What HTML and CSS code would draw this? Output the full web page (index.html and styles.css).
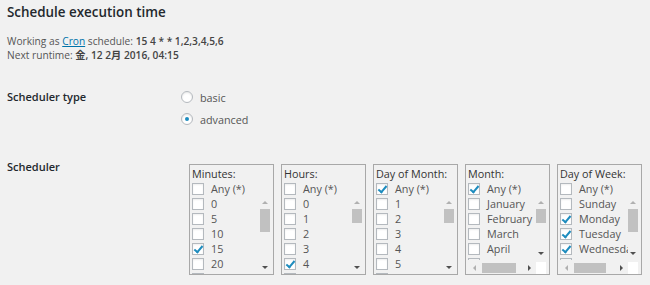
FILE: index.html
```html
<!DOCTYPE html>
<html lang="en">
<head>
    <meta charset="UTF-8">
    <title>Schedule execution time</title>
    <link rel="stylesheet" href="styles.css">
</head>
<body>
<div class="wrap">
    <h2>Schedule execution time</h2>
    <p class="info">
        Working as <a href="#">Cron</a> schedule: <b>15 4 * * 1,2,3,4,5,6</b><br>
        Next runtime: <b>金, 12 2月 2016, 04:15</b>
    </p>

    <div class="field-row">
        <div class="field-label type-label">Scheduler type</div>
        <div class="field-value">
            <label class="radio"><input type="radio" name="type"> basic</label>
            <label class="radio"><input type="radio" name="type" checked> advanced</label>
        </div>
    </div>

    <div class="field-row scheduler-row">
        <div class="field-label">Scheduler</div>
        <div class="boxes">
            <div class="box">
                <div class="box-title">Minutes:</div>
                <label class="opt"><input type="checkbox">Any (*)</label>
                <div class="scroll">
                    <div class="list">
                        <label class="opt"><input type="checkbox">0</label>
                        <label class="opt"><input type="checkbox">5</label>
                        <label class="opt"><input type="checkbox">10</label>
                        <label class="opt"><input type="checkbox" checked>15</label>
                        <label class="opt"><input type="checkbox">20</label>
                        <label class="opt"><input type="checkbox">25</label>
                    </div>
                    <div class="vbar">
                        <span class="btn up"></span>
                        <span class="track"><span class="thumb" style="height: 23px"></span></span>
                        <span class="btn down"></span>
                    </div>
                </div>
            </div>
            <div class="box">
                <div class="box-title">Hours:</div>
                <label class="opt"><input type="checkbox">Any (*)</label>
                <div class="scroll">
                    <div class="list">
                        <label class="opt"><input type="checkbox">0</label>
                        <label class="opt"><input type="checkbox">1</label>
                        <label class="opt"><input type="checkbox">2</label>
                        <label class="opt"><input type="checkbox">3</label>
                        <label class="opt"><input type="checkbox" checked>4</label>
                        <label class="opt"><input type="checkbox">5</label>
                    </div>
                    <div class="vbar">
                        <span class="btn up"></span>
                        <span class="track"><span class="thumb" style="height: 14px"></span></span>
                        <span class="btn down"></span>
                    </div>
                </div>
            </div>
            <div class="box">
                <div class="box-title">Day of Month:</div>
                <label class="opt"><input type="checkbox" checked>Any (*)</label>
                <div class="scroll">
                    <div class="list">
                        <label class="opt"><input type="checkbox">1</label>
                        <label class="opt"><input type="checkbox">2</label>
                        <label class="opt"><input type="checkbox">3</label>
                        <label class="opt"><input type="checkbox">4</label>
                        <label class="opt"><input type="checkbox">5</label>
                        <label class="opt"><input type="checkbox">6</label>
                    </div>
                    <div class="vbar">
                        <span class="btn up"></span>
                        <span class="track"><span class="thumb" style="height: 14px"></span></span>
                        <span class="btn down"></span>
                    </div>
                </div>
            </div>
            <div class="box">
                <div class="box-title">Month:</div>
                <label class="opt"><input type="checkbox" checked>Any (*)</label>
                <div class="scroll with-h">
                    <div class="list">
                        <label class="opt"><input type="checkbox">January</label>
                        <label class="opt"><input type="checkbox">February</label>
                        <label class="opt"><input type="checkbox">March</label>
                        <label class="opt"><input type="checkbox">April</label>
                        <label class="opt"><input type="checkbox">May</label>
                    </div>
                    <div class="vbar">
                        <span class="btn up"></span>
                        <span class="track"><span class="thumb" style="height: 14px"></span></span>
                        <span class="btn down"></span>
                    </div>
                    <div class="hbar">
                        <span class="btn left"></span>
                        <span class="track"><span class="thumb" style="width: 34px"></span></span>
                        <span class="btn right"></span>
                    </div>
                    <div class="corner"></div>
                </div>
            </div>
            <div class="box">
                <div class="box-title">Day of Week:</div>
                <label class="opt"><input type="checkbox">Any (*)</label>
                <div class="scroll with-h">
                    <div class="list">
                        <label class="opt"><input type="checkbox">Sunday</label>
                        <label class="opt"><input type="checkbox" checked>Monday</label>
                        <label class="opt"><input type="checkbox" checked>Tuesday</label>
                        <label class="opt"><input type="checkbox" checked>Wednesday</label>
                        <label class="opt"><input type="checkbox" checked>Thursday</label>
                    </div>
                    <div class="vbar">
                        <span class="btn up"></span>
                        <span class="track"><span class="thumb" style="height: 23px"></span></span>
                        <span class="btn down"></span>
                    </div>
                    <div class="hbar">
                        <span class="btn left"></span>
                        <span class="track"><span class="thumb" style="width: 32px"></span></span>
                        <span class="btn right"></span>
                    </div>
                    <div class="corner"></div>
                </div>
            </div>
        </div>
    </div>
</div>
</body>
</html>
```

FILE: styles.css
```css
body {
    margin: 0;
    background-color: #f1f1f1;
    font-family: "Open Sans", "Noto Sans CJK JP", sans-serif;
    font-size: 10.2px;
    color: #444;
}

.wrap {
    padding: 4px 0 0 7px;
}

h2 {
    margin: 0;
    font-size: 13.4px;
    line-height: 16px;
    font-weight: 600;
    color: #23282d;
}

.info {
    margin: 14px 0 0;
    line-height: 14px;
    color: #555;
}

.info b {
    font-weight: 600;
    color: #444;
}

.info a {
    color: #0073aa;
}

.field-row {
    display: grid;
    grid-template-columns: 174px 1fr;
    margin-top: 24px;
}

.field-label {
    font-size: 11px;
    line-height: 15px;
    font-weight: 600;
    color: #23282d;
}

.type-label {
    line-height: 22px;
}

.radio {
    display: flex;
    align-items: center;
    height: 22px;
    font-size: 10.8px;
    color: #555;
}

.radio input {
    appearance: none;
    position: relative;
    width: 12px;
    height: 12px;
    margin: 0 7px 0 0;
    border: 1px solid #b4b9be;
    border-radius: 50%;
    background: #fff;
    box-shadow: inset 0 1px 2px rgba(0, 0, 0, 0.1);
}

.radio input:checked::before {
    content: "";
    position: absolute;
    left: 3px;
    top: 3px;
    width: 4px;
    height: 4px;
    border-radius: 50%;
    background: #1e8cbe;
}

.scheduler-row {
    margin-top: 29px;
}

.boxes {
    display: flex;
    gap: 7px;
    margin: 5px 0 0 8px;
}

.box {
    width: 85px;
    height: 111px;
    box-sizing: border-box;
    border: 1px solid #a8a8a8;
    padding: 2px 3px 0 2px;
}

.box-title {
    font-size: 10.8px;
    line-height: 14px;
    color: #333;
}

.opt {
    display: flex;
    align-items: center;
    height: 15px;
    white-space: nowrap;
    font-size: 10.8px;
    color: #555;
}

.opt input {
    appearance: none;
    flex: none;
    position: relative;
    width: 12px;
    height: 12px;
    margin: 0 7px 0 0;
    border: 1px solid #b4b9be;
    background: #fff;
    box-shadow: inset 0 1px 2px rgba(0, 0, 0, 0.07);
}

.opt input:checked::before {
    content: "";
    position: absolute;
    left: 3px;
    top: 0;
    width: 3px;
    height: 7px;
    border: solid #1e8cbe;
    border-width: 0 2px 2px 0;
    transform: rotate(40deg);
}

/* list with a drawn scrollbar */
.scroll {
    display: grid;
    grid-template-columns: minmax(0, 1fr) 10px;
    grid-template-rows: 78px;
}

.scroll.with-h {
    grid-template-rows: 64px 14px;
}

.list {
    overflow: hidden;
}

.vbar {
    display: flex;
    flex-direction: column;
}

.hbar {
    display: flex;
    padding-top: 2px;
}

.track {
    flex: 1;
    display: flex;
    flex-direction: column;
}

.hbar .track {
    flex-direction: row;
    align-items: center;
}

.vbar .thumb {
    background: #c1c1c1;
}

.hbar .thumb {
    height: 10px;
    margin-left: 1px;
    background: #c1c1c1;
}

.btn {
    flex: none;
    display: flex;
    align-items: center;
    justify-content: center;
}

.vbar .btn {
    height: 13px;
}

.hbar .btn {
    width: 13px;
}

.btn::before {
    content: "";
    border: 3px solid transparent;
}

.btn.up::before {
    border-top-width: 0;
    border-bottom-color: #b0b0b0;
}

.btn.down::before {
    border-bottom-width: 0;
    border-top-color: #505050;
}

.btn.left::before {
    border-left-width: 0;
    border-right-color: #b0b0b0;
}

.btn.right::before {
    border-right-width: 0;
    border-left-color: #505050;
}

.corner {
    margin-top: 2px;
    background: #fff;
}
```
